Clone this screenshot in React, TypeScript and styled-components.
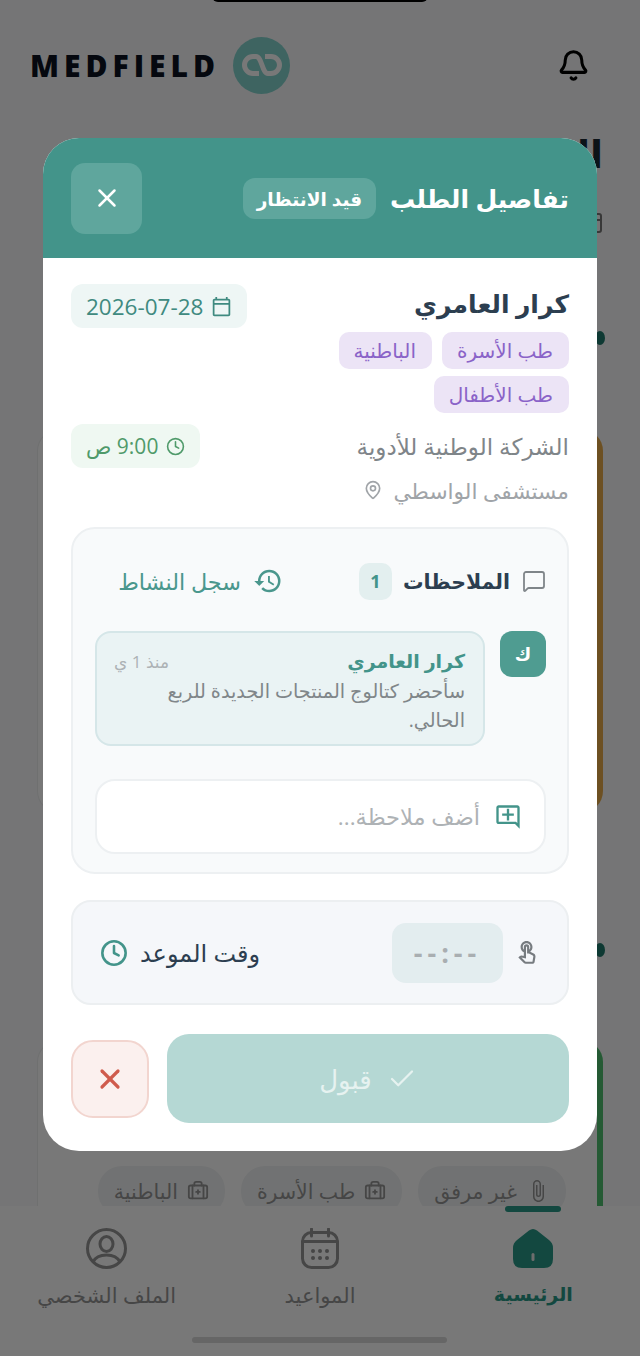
import React from "react";
import styled, { createGlobalStyle } from "styled-components";
import { Bell, X, Clock, MapPin, MessageSquare, Check, BriefcaseMedical, CalendarDays } from "lucide-react";
import { MdHistory, MdOutlineAddComment, MdOutlineCalendarToday, MdOutlineTouchApp, MdOutlineAttachFile } from "react-icons/md";

const GlobalStyle = createGlobalStyle`
  html, body {
    margin: 0;
    padding: 0;
    background: #f8f9fa;
  }
  * {
    box-sizing: border-box;
  }
  body {
    font-family: "Open Sans", "Noto Sans", "DejaVu Sans", sans-serif;
  }
`;

const Screen = styled.div`
  position: relative;
  width: 640px;
  height: 1356px;
  overflow: hidden;
  background: #f8f9fa;
`;

const Notch = styled.div`
  position: absolute;
  top: -10px;
  left: 212px;
  width: 216px;
  height: 12px;
  background: #000;
  border-radius: 8px;
  z-index: 5;
`;

const TopBar = styled.header`
  display: flex;
  justify-content: space-between;
  align-items: center;
  height: 130px;
  padding: 0 26px 0 30px;
`;

const Brand = styled.div`
  display: flex;
  align-items: center;
  gap: 13px;
`;

const BrandName = styled.div`
  font-size: 30px;
  font-weight: 800;
  letter-spacing: 5px;
  color: #0c1220;
`;

const LogoCircle = styled.div`
  width: 57px;
  height: 57px;
  border-radius: 50%;
  background: #84d4cf;
  display: flex;
  align-items: center;
  justify-content: center;
`;

const BellBox = styled.div`
  width: 82px;
  height: 68px;
  border-radius: 20px;
  display: flex;
  align-items: center;
  justify-content: center;
  color: #000;
`;

const Feed = styled.main`
  display: flex;
  flex-direction: column;
  align-items: stretch;
  padding: 0 37px;
  direction: rtl;
`;

const FeedTitle = styled.h1`
  align-self: flex-start;
  height: 46px;
  margin: 0;
  font-size: 38px;
  font-weight: 700;
  line-height: 46px;
  color: #1b2a33;
`;

const CaseMark = styled.div`
  align-self: flex-start;
  display: flex;
  height: 24px;
  margin-top: 34px;
  margin-right: -1px;
  color: #777;
`;

const Dot = styled.div`
  align-self: flex-start;
  width: 10px;
  height: 14px;
  margin-right: -2px;
  border-radius: 50%;
  background: #1f7a6c;
`;

const FirstDot = styled(Dot)`
  margin-top: 97px;
`;

const NextDot = styled(Dot)`
  margin-top: 130px;
`;

const FeedCard = styled.div<{ $accent: string; $height: number }>`
  height: ${(p) => p.$height}px;
  background: #fff;
  border: 1px solid #eceeef;
  border-right: 6px solid ${(p) => p.$accent};
  border-radius: 22px;
`;

const OrangeCard = styled(FeedCard)`
  margin-top: 84px;
`;

const GreenCard = styled(FeedCard)`
  margin-top: 83px;
  display: flex;
  align-items: flex-start;
  gap: 16px;
  padding: 125px 31px 0 0;
`;

const Chip = styled.div`
  display: flex;
  align-items: center;
  gap: 9px;
  height: 50px;
  padding: 0 16px;
  border-radius: 24px;
  background: #f1f3f4;
  color: #959595;
  font-size: 20.5px;
  white-space: nowrap;
`;

const BottomNav = styled.nav`
  position: absolute;
  left: 0;
  right: 0;
  bottom: 0;
  height: 150px;
  display: grid;
  grid-template-columns: repeat(3, 1fr);
  direction: rtl;
  background: #fff;
  padding-top: 22px;
`;

const NavIndicator = styled.div`
  position: absolute;
  top: 0;
  right: 79px;
  width: 56px;
  height: 6px;
  border-radius: 3px;
  background: #2a9a88;
`;

const NavItem = styled.div<{ $active?: boolean }>`
  display: flex;
  flex-direction: column;
  align-items: center;
  gap: 12px;
  color: ${(p) => (p.$active ? "#2a9a88" : "#959595")};
  font-size: ${(p) => (p.$active ? 19 : 21)}px;
  font-weight: ${(p) => (p.$active ? 700 : 400)};
  svg {
    height: 41px;
  }
`;

const HomeBar = styled.div`
  position: absolute;
  left: 192px;
  bottom: 13px;
  width: 255px;
  height: 6px;
  border-radius: 3px;
  background: #d8d8d8;
`;

const Overlay = styled.div`
  position: absolute;
  inset: 0;
  z-index: 2;
  background: rgba(0, 0, 0, 0.53);
`;

const Modal = styled.section`
  position: absolute;
  top: 138px;
  left: 43px;
  width: 554px;
  height: 1013px;
  z-index: 3;
  direction: rtl;
  background: #fff;
  border-radius: 36px;
  overflow: hidden;
`;

const ModalHeader = styled.div`
  display: flex;
  align-items: center;
  height: 120px;
  padding: 0 28px;
  background: #43948a;
  color: #fff;
`;

const ModalTitle = styled.h2`
  margin: 0;
  font-size: 25px;
  font-weight: 600;
`;

const StatusPill = styled.div`
  display: flex;
  align-items: center;
  height: 41px;
  margin-right: 14px;
  padding: 0 14px;
  border-radius: 12px;
  background: #5fa69d;
  font-size: 18.5px;
  font-weight: 600;
`;

const CloseButton = styled.button`
  width: 71px;
  height: 71px;
  margin-right: auto;
  border: none;
  border-radius: 14px;
  background: #5fa69d;
  color: #fff;
  display: flex;
  align-items: center;
  justify-content: center;
  padding: 0;
`;

const ModalBody = styled.div`
  display: flex;
  flex-direction: column;
  padding: 26px 28px 0;
`;

const InfoRow = styled.div`
  display: flex;
  justify-content: space-between;
  align-items: flex-start;
`;

const PersonName = styled.div`
  font-size: 25px;
  font-weight: 700;
  line-height: 38px;
  color: #2c3e50;
`;

const MetaPill = styled.div<{ $bg: string; $fg: string; $size: number }>`
  display: flex;
  align-items: center;
  gap: 8px;
  height: 44px;
  padding: 0 15px;
  border-radius: 12px;
  background: ${(p) => p.$bg};
  color: ${(p) => p.$fg};
  font-size: ${(p) => p.$size}px;
  white-space: nowrap;
`;

const TagList = styled.div`
  display: flex;
  flex-wrap: wrap;
  gap: 7px 10px;
  width: 240px;
  margin-top: 4px;
`;

const Tag = styled.span`
  display: flex;
  align-items: center;
  height: 37px;
  padding: 0 16px 0 15px;
  border-radius: 10px;
  background: #ece4f6;
  color: #8a63c8;
  font-size: 20px;
`;

const CompanyRow = styled(InfoRow)`
  align-items: center;
  margin-top: 11px;
`;

const CompanyName = styled.div`
  font-size: 23px;
  color: #7f8589;
`;

const LocationRow = styled.div`
  display: flex;
  align-items: center;
  gap: 11px;
  margin-top: 5px;
  height: 34px;
  font-size: 21.7px;
  color: #a0a4a8;
`;

const NotesPanel = styled.div`
  display: flex;
  flex-direction: column;
  height: 347px;
  margin-top: 20px;
  padding: 0 21px 0 22px;
  border: 2px solid #edf0f2;
  border-radius: 24px;
  background: #f8fafb;
`;

const NotesHead = styled.div`
  display: flex;
  align-items: center;
  height: 102px;
  padding-top: 2px;
`;

const NotesTitle = styled.div`
  display: flex;
  align-items: center;
  gap: 12px;
  font-size: 20.5px;
  font-weight: 700;
  color: #2c3e50;
  svg {
    color: #7f8589;
  }
`;

const CountBadge = styled.span`
  display: flex;
  align-items: center;
  justify-content: center;
  width: 33px;
  height: 37px;
  margin-right: 11px;
  border-radius: 10px;
  background: #e3efef;
  color: #43948a;
  font-size: 18px;
  font-weight: 700;
`;

const ActivityLink = styled.div`
  display: flex;
  align-items: center;
  gap: 12px;
  margin-right: 76px;
  font-size: 22.3px;
  color: #4a978d;
`;

const NoteRow = styled.div`
  display: flex;
  align-items: flex-start;
  gap: 15px;
`;

const Avatar = styled.div`
  flex: none;
  width: 46px;
  height: 46px;
  border-radius: 12px;
  background: #4f9c91;
  color: #fff;
  display: flex;
  align-items: center;
  justify-content: center;
  font-size: 18px;
  font-weight: 700;
`;

const NoteBubble = styled.div`
  width: 390px;
  height: 115px;
  padding: 13px 18px 0 17px;
  border: 2px solid #d5e6e8;
  border-radius: 16px;
  background: #eaf3f4;
`;

const NoteTop = styled.div`
  display: flex;
  justify-content: space-between;
  align-items: center;
  height: 30px;
`;

const NoteAuthor = styled.span`
  font-size: 19px;
  font-weight: 700;
  color: #43948a;
`;

const NoteTime = styled.span`
  font-size: 17px;
  color: #adb2b5;
`;

const NoteText = styled.div`
  font-size: 19.2px;
  line-height: 29px;
  color: #808689;
`;

const AddNote = styled.label`
  display: flex;
  align-items: center;
  gap: 12px;
  height: 75px;
  margin-top: 33px;
  padding: 0 22px 0 20px;
  border: 2px solid #edf0f2;
  border-radius: 20px;
  background: #fff;
  color: #43948a;
`;

const AddNoteInput = styled.input`
  flex: 1;
  min-width: 0;
  border: none;
  outline: none;
  background: none;
  direction: rtl;
  font: inherit;
  font-size: 22.5px;
  &::placeholder {
    color: #aeb2b5;
    opacity: 1;
  }
`;

const TimePanel = styled.div`
  display: flex;
  align-items: center;
  height: 105px;
  margin-top: 26px;
  padding: 0 27px 0 27px;
  border: 2px solid #eceff1;
  border-radius: 20px;
  background: #f5f7fa;
`;

const TouchMark = styled.div`
  display: flex;
  color: #777c80;
`;

const TimeField = styled.div`
  display: flex;
  align-items: center;
  justify-content: center;
  width: 111px;
  height: 60px;
  margin-right: 11px;
  border-radius: 14px;
  background: #e3edef;
  color: #a9aeb1;
  font-size: 27px;
  font-weight: 700;
  letter-spacing: 5px;
  direction: ltr;
`;

const TimeLabel = styled.div`
  display: flex;
  align-items: center;
  gap: 12px;
  margin-right: auto;
  font-size: 24px;
  line-height: 30px;
  color: #2c3e50;
  svg {
    color: #43948a;
  }
`;

const Actions = styled.div`
  display: flex;
  align-items: center;
  gap: 18px;
  margin-top: 29px;
`;

const AcceptButton = styled.button`
  display: flex;
  flex: 1;
  align-items: center;
  justify-content: center;
  gap: 15px;
  height: 89px;
  border: none;
  border-radius: 22px;
  background: #b5d8d4;
  color: #e6f2f0;
  font: inherit;
  font-size: 26px;
`;

const RejectButton = styled.button`
  display: flex;
  align-items: center;
  justify-content: center;
  width: 78px;
  height: 78px;
  padding: 0;
  border: 2px solid #f2d5cf;
  border-radius: 22px;
  background: #fbf0ee;
  color: #cf5b4c;
`;

const LinkLogo = () => (
  <svg width="40" height="24" viewBox="0 0 40 24" fill="none" stroke="#fff" strokeWidth="5">
    <path d="M17 20.5 H11 A8.5 8.5 0 0 1 11 3.5 H14 C20 3.5 20 20.5 26 20.5 H29 A8.5 8.5 0 0 0 29 3.5 H23" />
  </svg>
);

const HomeIcon = () => (
  <svg width="40" height="41" viewBox="0 0 40 41">
    <path d="M16 2.5 Q20 -0.5 24 2.5 L36 12 Q40 15 40 20 V31 Q40 40 31 40 H9 Q0 40 0 31 V20 Q0 15 4 12 Z" fill="#2a9a88" />
    <rect x="18.5" y="25" width="3" height="8" rx="1.5" fill="#e8e8e8" />
  </svg>
);

const CalendarIcon = () => (
  <svg width="38" height="41" viewBox="0 0 38 41" fill="none" stroke="#959595" strokeWidth="3">
    <rect x="1.5" y="4.5" width="35" height="35" rx="9" />
    <path d="M10.5 1 V8 M27.5 1 V8 M1.5 13.5 H36.5" strokeLinecap="round" />
    <g fill="#959595" stroke="none">
      <circle cx="12" cy="23" r="2" />
      <circle cx="19" cy="23" r="2" />
      <circle cx="26" cy="23" r="2" />
      <circle cx="12" cy="30" r="2" />
      <circle cx="19" cy="30" r="2" />
      <circle cx="26" cy="30" r="2" />
    </g>
  </svg>
);

const ProfileIcon = () => (
  <svg width="41" height="41" viewBox="0 0 41 41" fill="none" stroke="#959595" strokeWidth="3">
    <circle cx="20.5" cy="20.5" r="19" />
    <ellipse cx="20.5" cy="16" rx="6.5" ry="7.5" />
    <path d="M7 34 C10 28 15 27 20.5 27 C26 27 31 28 34 34" />
  </svg>
);

const App = () => {
  return (
    <Screen>
      <GlobalStyle />
      <Notch />
      <TopBar>
        <Brand>
          <BrandName>MEDFIELD</BrandName>
          <LogoCircle>
            <LinkLogo />
          </LogoCircle>
        </Brand>
        <BellBox>
          <Bell size={33} strokeWidth={2.2} />
        </BellBox>
      </TopBar>

      <Feed>
        <FeedTitle>الطلبات</FeedTitle>
        <CaseMark>
          <CalendarDays size={24} />
        </CaseMark>
        <FirstDot />
        <OrangeCard $accent="#e8ab4a" $height={384} />
        <NextDot />
        <GreenCard $accent="#4fc070" $height={320}>
          <Chip>
            <MdOutlineAttachFile size={24} />
            غير مرفق
          </Chip>
          <Chip>
            <BriefcaseMedical size={22} />
            طب الأسرة
          </Chip>
          <Chip>
            <BriefcaseMedical size={22} />
            الباطنية
          </Chip>
        </GreenCard>
      </Feed>

      <BottomNav>
        <NavIndicator />
        <NavItem $active>
          <HomeIcon />
          الرئيسية
        </NavItem>
        <NavItem>
          <CalendarIcon />
          المواعيد
        </NavItem>
        <NavItem>
          <ProfileIcon />
          الملف الشخصي
        </NavItem>
        <HomeBar />
      </BottomNav>

      <Overlay />

      <Modal>
        <ModalHeader>
          <ModalTitle>تفاصيل الطلب</ModalTitle>
          <StatusPill>قيد الانتظار</StatusPill>
          <CloseButton>
            <X size={30} strokeWidth={2} />
          </CloseButton>
        </ModalHeader>

        <ModalBody>
          <InfoRow>
            <PersonName>كرار العامري</PersonName>
            <MetaPill $bg="#eef6f5" $fg="#3f8a80" $size={22.5}>
              <MdOutlineCalendarToday size={21} />
              2026-07-28
            </MetaPill>
          </InfoRow>
          <TagList>
            <Tag>طب الأسرة</Tag>
            <Tag>الباطنية</Tag>
            <Tag>طب الأطفال</Tag>
          </TagList>
          <CompanyRow>
            <CompanyName>الشركة الوطنية للأدوية</CompanyName>
            <MetaPill $bg="#eff8f2" $fg="#4f9a6a" $size={21}>
              <Clock size={19} />
              9:00 ص
            </MetaPill>
          </CompanyRow>
          <LocationRow>
            مستشفى الواسطي
            <MapPin size={20} />
          </LocationRow>

          <NotesPanel>
            <NotesHead>
              <NotesTitle>
                <MessageSquare size={24} strokeWidth={1.8} />
                الملاحظات
              </NotesTitle>
              <CountBadge>1</CountBadge>
              <ActivityLink>
                <MdHistory size={30} />
                سجل النشاط
              </ActivityLink>
            </NotesHead>
            <NoteRow>
              <Avatar>ك</Avatar>
              <NoteBubble>
                <NoteTop>
                  <NoteAuthor>كرار العامري</NoteAuthor>
                  <NoteTime>منذ 1 ي</NoteTime>
                </NoteTop>
                <NoteText>سأحضر كتالوج المنتجات الجديدة للربع الحالي.</NoteText>
              </NoteBubble>
            </NoteRow>
            <AddNote>
              <MdOutlineAddComment size={28} />
              <AddNoteInput placeholder="أضف ملاحظة..." />
            </AddNote>
          </NotesPanel>

          <TimePanel>
            <TouchMark>
              <MdOutlineTouchApp size={26} />
            </TouchMark>
            <TimeField>--:--</TimeField>
            <TimeLabel>
              وقت الموعد
              <Clock size={28} strokeWidth={2.2} />
            </TimeLabel>
          </TimePanel>

          <Actions>
            <AcceptButton>
              <Check size={30} strokeWidth={1.8} />
              قبول
            </AcceptButton>
            <RejectButton>
              <X size={32} strokeWidth={2.4} />
            </RejectButton>
          </Actions>
        </ModalBody>
      </Modal>
    </Screen>
  );
};

export default App;
